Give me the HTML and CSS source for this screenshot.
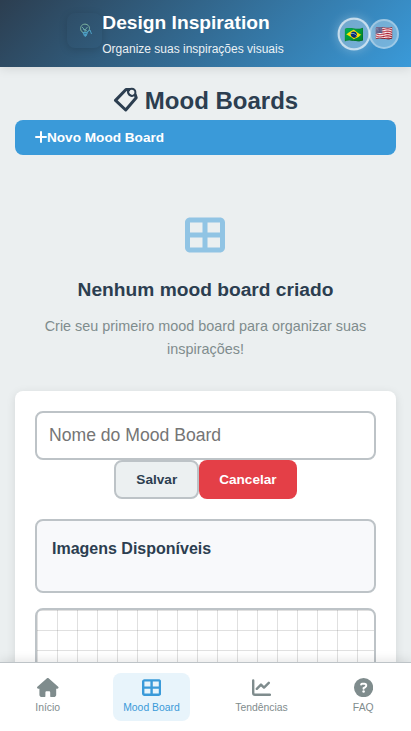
FILE: index.html
```html
<!DOCTYPE html>
<html lang="pt-BR">
<head>
<meta charset="utf-8">
<meta name="viewport" content="width=device-width, initial-scale=1">
<title>Design Inspiration</title>
<link rel="stylesheet" href="styles.css">
</head>
<body>
<header class="header">
  <div class="brand">
    <div class="logo">
      <svg width="14" height="16" viewBox="0 0 14 16" fill="none" stroke-width="1">
        <path d="M4 9.500C1 8 .8 3.500 3.500 1.800 6.500 0 10.500 2 10.500 5.500c0 1.500-.8 2.700-2 3.500" stroke="#7fb5a0"/>
        <path d="M3 4l3 3 2.500-3M6 7v2M4 6l4 2" stroke="#69a7a5"/>
        <path d="M4 9.500h4.500L7 13H5.500zM8 9l3-2 1.500 4" stroke="#4d9fc4"/>
        <path d="M4.500 10.500h4L6.500 14z" fill="#4d9fc4"/>
      </svg>
    </div>
    <div class="brand-text">
      <h1>Design Inspiration</h1>
      <p>Organize suas inspirações visuais</p>
    </div>
  </div>
  <div class="langs">
    <button class="lang active" aria-label="Português">🇧🇷</button>
    <button class="lang" aria-label="English">🇺🇸</button>
  </div>
</header>

<main class="main">
  <h2 class="page-title">
    <svg width="25" height="25" viewBox="0 0 25 25" fill="none" stroke="#2c3e50" stroke-width="3" stroke-linejoin="round">
      <path d="M17 2.500H13L2.500 13.400 12.700 23 23.200 10.700 22 7"/>
      <circle cx="18.800" cy="5.300" r="3.600" stroke-width="2"/>
      <path d="M14.500 3.500c.3 2.500 1.800 4.500 5 5.500" stroke-width="1.600"/>
    </svg>
    <span>Mood Boards</span>
  </h2>
  <button class="new-board">
    <svg width="12" height="12" viewBox="0 0 12 12" stroke="#fff" stroke-width="2" stroke-linecap="round"><path d="M6 1v10M1 6h10"/></svg>
    <span>Novo Mood Board</span>
  </button>

  <section class="empty">
    <svg class="empty-icon" viewBox="0 0 512 512" fill="#3a9bd9"><path fill-rule="evenodd" d="M448 96V224H288V96H448zm0 192V416H288V288H448zM224 224H64V96H224V224zM64 288H224V416H64V288zM64 32C28.700 32 0 60.700 0 96V416c0 35.300 28.700 64 64 64H448c35.300 0 64-28.700 64-64V96c0-35.300-28.700-64-64-64H64z"/></svg>
    <h3>Nenhum mood board criado</h3>
    <p>Crie seu primeiro mood board para organizar suas inspirações!</p>
  </section>

  <section class="editor">
    <input class="name" type="text" placeholder="Nome do Mood Board">
    <div class="actions">
      <button class="btn save">Salvar</button>
      <button class="btn cancel">Cancelar</button>
    </div>
    <div class="images"><h4>Imagens Disponíveis</h4></div>
    <div class="canvas"></div>
  </section>
</main>

<nav class="nav">
  <a class="item">
    <svg width="21.600" height="19.200" viewBox="0 0 576 512" fill="currentColor"><path d="M575.800 255.500c0 18-15 32.100-32 32.100h-32l.7 160.200c0 35.300-28.700 64.200-64 64.200H376c-22.100 0-24-17.900-24-40V384c0-17.700-14.300-32-32-32H256c-17.700 0-32 14.300-32 32v88c0 22.100-1.900 40-24 40H128.100c-35.300 0-64-28.700-64-64V287.600H32c-18 0-32-14-32-32.100 0-9 3-17 10-24L266.400 8c7-7 15-8 22-8s15 2 21 7L564.800 231.500c8 7 12 15 11 24z"/></svg>
    <span>Início</span>
  </a>
  <a class="item active">
    <svg width="19.200" height="19.200" viewBox="0 0 512 512" fill="currentColor"><path fill-rule="evenodd" d="M448 96V224H288V96H448zm0 192V416H288V288H448zM224 224H64V96H224V224zM64 288H224V416H64V288zM64 32C28.700 32 0 60.700 0 96V416c0 35.300 28.700 64 64 64H448c35.300 0 64-28.700 64-64V96c0-35.300-28.700-64-64-64H64z"/></svg>
    <span>Mood Board</span>
  </a>
  <a class="item">
    <svg width="19.200" height="19.200" viewBox="0 0 512 512" fill="none" stroke="currentColor" stroke-width="64" stroke-linecap="round" stroke-linejoin="round"><path d="M32 64V400c0 26 22 48 48 48H480M128 288L240 176l80 80L448 128"/></svg>
    <span>Tendências</span>
  </a>
  <a class="item">
    <svg width="19.200" height="19.200" viewBox="0 0 512 512"><circle cx="256" cy="256" r="256" fill="currentColor"/><path d="M191 174c5-14 15-22 31-22h59c52 0 62 66 21 89l-46 27v20" fill="none" stroke="#fff" stroke-width="54" stroke-linecap="round" stroke-linejoin="round"/><circle cx="256" cy="362" r="34" fill="#fff"/></svg>
    <span>FAQ</span>
  </a>
</nav>
</body>
</html>
```
FILE: styles.css
```css
* { box-sizing: border-box; margin: 0; padding: 0; }
html, body { height: 100%; overflow: hidden; }
body {
  display: flex;
  flex-direction: column;
  font-family: "Liberation Sans", Arial, sans-serif;
  background: #ebeff0;
  color: #2c3e50;
}
button { font: inherit; border: none; }
.header {
  flex: none;
  height: 67px;
  display: flex;
  align-items: center;
  padding: 0 12px 0 15px;
  background: linear-gradient(135deg, #2c3e50 0%, #3a9ad9 100%);
  box-shadow: 0 2px 10px rgba(0, 0, 0, .1);
  z-index: 1;
}
.brand { flex: 1; display: flex; align-items: center; justify-content: center; padding-right: 3px; }
.logo {
  width: 35px;
  height: 35px;
  margin-top: -6px;
  border-radius: 8px;
  display: flex;
  align-items: center;
  justify-content: center;
  box-shadow: 0 2px 8px rgba(0, 0, 0, .15);
}
.logo svg { margin-left: 2px; }
.brand-text { color: #fff; padding-bottom: 1px; }
.brand-text h1 { font-size: 19.2px; line-height: 31px; }
.brand-text p { font-size: 12px; line-height: 19px; margin-top: 2px; opacity: .9; }
.langs { display: flex; align-items: center; }
.lang {
  width: 30px;
  height: 30px;
  border-radius: 50%;
  border: 2px solid rgba(255, 255, 255, .3);
  background: rgba(255, 255, 255, .3);
  color: #000;
  font-size: 14.4px;
  line-height: 1;
  display: flex;
  align-items: center;
  justify-content: center;
}
.lang.active {
  transform: scale(1.1);
  border-color: rgba(255, 255, 255, .6);
  box-shadow: 0 0 10px rgba(255, 255, 255, .3);
}
.main { flex: 1; min-height: 0; overflow: hidden; padding: 16px 15px 0; }
.page-title { display: flex; justify-content: center; align-items: center; gap: 7px; height: 36px; margin-bottom: 1px; font-size: 24px; }
.page-title svg { margin-top: -3px; }
.new-board {
  width: 100%;
  height: 35px;
  padding: 0 20px;
  display: flex;
  align-items: center;
  border-radius: 8px;
  background: #3a9ad9;
  color: #fff;
  font-size: 13.6px;
  font-weight: bold;
}
.new-board svg { margin-top: -1px; }
.empty { padding: 60px 20px 30px; text-align: center; }
.empty-icon { display: block; width: 41px; height: 40px; padding-right: 1px; margin: 0 auto 19px; opacity: .5; }
.empty h3 { font-size: 19.2px; line-height: 31px; margin-bottom: 10px; }
.empty p { font-size: 14.4px; line-height: 23px; color: #7f8c8d; }
.editor {
  height: 500px;
  padding: 20px;
  border-radius: 8px;
  background: #fff;
  box-shadow: 0 2px 10px rgba(0, 0, 0, .1);
}
.name {
  display: block;
  width: 100%;
  height: 49px;
  padding: 0 12px;
  border: 2px solid #bdc3c7;
  border-radius: 8px;
  font: 17.6px "Liberation Sans", Arial, sans-serif;
}
.name::placeholder { color: #757575; }
.actions { display: flex; justify-content: center; }
.btn { height: 39px; padding: 0 20px; border-radius: 8px; font-size: 13.6px; font-weight: bold; }
.save { border: 2px solid #bdc3c7; background: #ecf0f1; color: #2c3e50; }
.cancel { background: #e43f47; color: #fff; }
.images {
  height: 74px;
  margin: 20px 0 15px;
  padding: 15px;
  border: 2px solid #bdc3c7;
  border-radius: 8px;
  background: #f8f9fb;
}
.images h4 { font-size: 16px; line-height: 25px; }
.canvas {
  height: 400px;
  border: 2px solid #bdc3c7;
  border-radius: 8px;
  background-color: #fff;
  background-image:
    linear-gradient(rgba(0, 0, 0, .12) 1px, transparent 1px),
    linear-gradient(90deg, rgba(0, 0, 0, .12) 1px, transparent 1px);
  background-size: 20px 20px;
}
.nav {
  flex: none;
  height: 69px;
  display: flex;
  justify-content: space-around;
  padding: 10px 0;
  border-top: 1px solid #bdc3c7;
  background: #fff;
  box-shadow: 0 -2px 10px rgba(0, 0, 0, .1);
  z-index: 1;
}
.item {
  min-width: 60px;
  height: 48px;
  padding: 5px 10px;
  display: flex;
  flex-direction: column;
  align-items: center;
  border-radius: 8px;
  color: #7f8c8d;
  font-size: 10.4px;
}
.item span { line-height: 17px; margin-top: 1.8px; }
.item.active { color: #3a9ad9; background: #e8f4fb; }
```
